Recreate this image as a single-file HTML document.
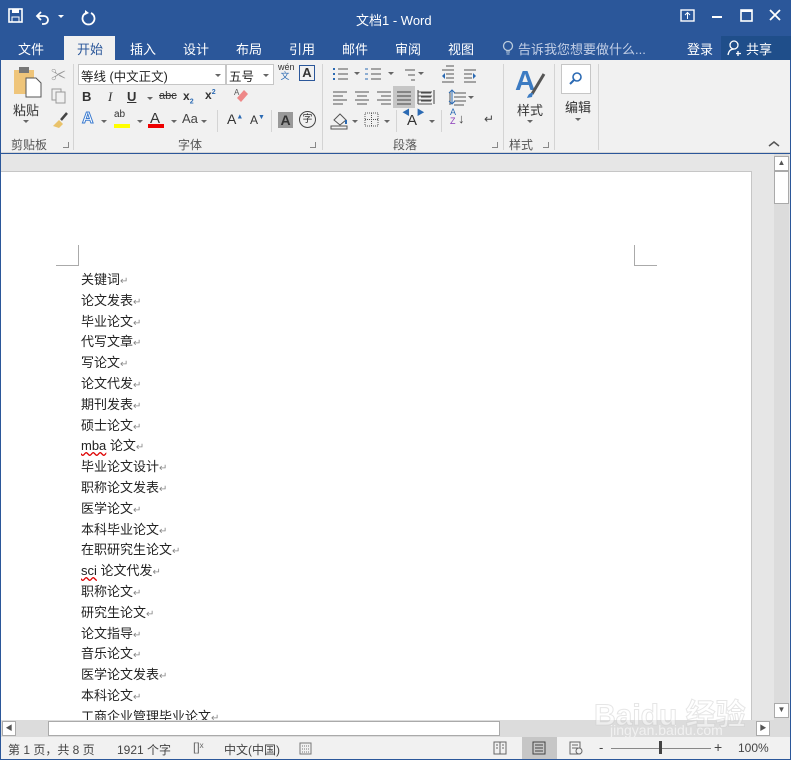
<!DOCTYPE html>
<html><head><meta charset="utf-8"><style>
*{margin:0;padding:0;box-sizing:border-box}
body{width:791px;height:760px;overflow:hidden;font-family:"Liberation Sans","Noto Sans CJK SC",sans-serif;background:#2b579a;position:relative}
.a{position:absolute}
.w{color:#fff}
.t{font-size:13px;color:#fff;top:39px}
.g{color:#444;font-size:12px}
.line{position:absolute;left:81px;font-size:13px;color:#222;white-space:nowrap}
.ret{color:#888;font-size:10px}
.sep{position:absolute;width:1px;background:#d4d4d4}
</style></head><body>
<svg class="a" style="left:8px;top:7px" width="100" height="20">
<rect x="1" y="2" width="13" height="13" fill="none" stroke="#fff" stroke-width="1.6"/><rect x="4" y="2" width="7" height="4" fill="#fff"/><rect x="4" y="10" width="7" height="5" fill="none" stroke="#fff"/>
<path d="M33 5 l-4 4 4 4 M29 9 h7 a4 4 0 0 1 0 8 h-2" fill="none" stroke="#fff" stroke-width="1.8"/>
<path d="M50 8 l3 3 3-3z" fill="#fff"/>
<path d="M83 6 a6 6 0 1 1 -5 0" fill="none" stroke="#fff" stroke-width="1.8"/><path d="M77 3 l4 3-4 2z" fill="#fff"/>
<path d="M104 11 h4 M104 14 l2 2 2-2z" fill="#fff" stroke="#fff"/>
</svg>
<div class="a w" style="left:356px;top:10px;font-size:13px">文档1 - Word</div>
<svg class="a" style="left:680px;top:8px" width="105" height="18">
<rect x="1" y="2" width="13" height="11" fill="none" stroke="#fff" stroke-width="1.4"/><path d="M7.5 11 v-6 M5 7 l2.5-2.5 2.5 2.5" stroke="#fff" fill="none"/>
<rect x="32" y="8" width="10" height="2" fill="#fff"/>
<rect x="61" y="2" width="11" height="11" fill="none" stroke="#fff" stroke-width="1.6"/><rect x="61" y="2" width="11" height="2" fill="#fff"/>
<path d="M90 2 l10 10 M100 2 l-10 10" stroke="#fff" stroke-width="1.8"/>
</svg>
<div class="a t" style="left:18px">文件</div>
<div class="a" style="left:64px;top:36px;width:51px;height:25px;background:#f1f1f1"></div>
<div class="a t" style="left:77px;color:#2b579a">开始</div>
<div class="a t" style="left:130px">插入</div>
<div class="a t" style="left:183px">设计</div>
<div class="a t" style="left:236px">布局</div>
<div class="a t" style="left:289px">引用</div>
<div class="a t" style="left:342px">邮件</div>
<div class="a t" style="left:395px">审阅</div>
<div class="a t" style="left:448px">视图</div>
<svg class="a" style="left:502px;top:40px" width="12" height="16"><circle cx="6" cy="6" r="4.5" fill="none" stroke="#bcd" stroke-width="1.3"/><path d="M4 12 h4 M4.5 14 h3" stroke="#bcd"/></svg>
<div class="a t" style="left:518px;color:#c3cfe6">告诉我您想要做什么...</div>
<div class="a t" style="left:687px">登录</div>
<div class="a" style="left:721px;top:36px;width:70px;height:24px;background:#1f4e8a"></div>
<svg class="a" style="left:727px;top:39px" width="16" height="18"><circle cx="7" cy="6" r="4" fill="none" stroke="#fff" stroke-width="1.3"/><path d="M1 16 q1-6 6-6 M11 12 v5 M9 14.5 h5" fill="none" stroke="#fff" stroke-width="1.3"/></svg>
<div class="a t" style="left:746px">共享</div>
<div class="a" style="left:1px;top:60px;width:789px;height:93px;background:#f1f1f1;border-bottom:1px solid #d5d5d5"></div>
<svg class="a" style="left:12px;top:66px" width="30" height="32"><rect x="2" y="4" width="20" height="24" fill="#efc57a"/><rect x="7" y="1" width="10" height="6" fill="#777"/><path d="M14 12 h10 l5 5 v14 h-15z" fill="#fff" stroke="#555"/></svg>
<div class="a g" style="left:13px;top:100px;font-size:13px;color:#333">粘贴</div>
<div class="a" style="left:23px;top:120px;border:3px solid transparent;border-top-color:#666"></div>
<div class="a" style="left:51px;top:64px;color:#999;font-size:15px">✂</div>
<svg class="a" style="left:51px;top:88px" width="16" height="16"><rect x="1" y="1" width="9" height="11" fill="none" stroke="#999"/><rect x="5" y="4" width="9" height="11" fill="#f1f1f1" stroke="#999"/></svg>
<svg class="a" style="left:51px;top:110px" width="18" height="18"><path d="M2 16 l6-6 4 4-4 4z" fill="#e9c26a"/><path d="M10 10 l6-7" stroke="#444" stroke-width="2.5"/></svg>
<div class="a g" style="left:11px;top:136px;color:#555">剪贴板</div>
<div class="sep" style="left:73px;top:64px;height:86px"></div>
<div class="a" style="left:78px;top:64px;width:148px;height:21px;background:#fff;border:1px solid #c6c6c6;font-size:12.5px;padding:1px 2px;color:#222">等线 (中文正文)</div>
<div class="a" style="left:215px;top:74px;border:3px solid transparent;border-top-color:#666"></div>
<div class="a" style="left:226px;top:64px;width:48px;height:21px;background:#fff;border:1px solid #c6c6c6;font-size:12.5px;padding:1px 2px;color:#222">五号</div>
<div class="a" style="left:263px;top:74px;border:3px solid transparent;border-top-color:#666"></div>
<div class="a" style="left:278px;top:63px;font-size:9px;color:#333;line-height:9px">wén<br><span style="color:#2b6ab3">&nbsp;文</span></div>
<div class="a" style="left:299px;top:65px;width:16px;height:16px;border:1.5px solid #2b579a;font-size:13px;font-weight:bold;text-align:center;line-height:13px;color:#333">A</div>
<div class="a" style="left:82px;top:89px;font-size:13px;color:#333;font-weight:bold">B</div>
<div class="a" style="left:108px;top:89px;font-size:13px;color:#333;font-style:italic;font-family:'Liberation Serif',serif">I</div>
<div class="a" style="left:127px;top:89px;font-size:13px;color:#333;text-decoration:underline;font-weight:bold">U</div>
<div class="a" style="left:147px;top:97px;border:3px solid transparent;border-top-color:#666"></div>
<div class="a" style="left:159px;top:90px;font-size:11px;color:#333;text-decoration:line-through">abc</div>
<div class="a" style="left:183px;top:89px;font-size:12px;color:#333;font-weight:bold">x<sub style="font-size:7px;color:#2b6ab3">2</sub></div>
<div class="a" style="left:205px;top:88px;font-size:12px;color:#333;font-weight:bold">x<sup style="font-size:7px;color:#2b6ab3">2</sup></div>
<svg class="a" style="left:233px;top:86px" width="18" height="18"><path d="M4 12 l7-8 4 4-7 8z" fill="#e88" /><text x="1" y="9" font-size="8" fill="#555">A</text></svg>
<div class="a" style="left:82px;top:110px;font-size:16px;color:#fff;-webkit-text-stroke:1px #3b7bd0;font-weight:bold">A</div>
<div class="a" style="left:101px;top:120px;border:3px solid transparent;border-top-color:#666"></div>
<div class="a" style="left:114px;top:109px;font-size:10px;color:#333">ab</div>
<div class="a" style="left:114px;top:124px;width:16px;height:4px;background:#ffff00"></div>
<div class="a" style="left:137px;top:120px;border:3px solid transparent;border-top-color:#666"></div>
<div class="a" style="left:150px;top:110px;font-size:15px;color:#333">A</div>
<div class="a" style="left:148px;top:124px;width:16px;height:4px;background:#e00"></div>
<div class="a" style="left:171px;top:120px;border:3px solid transparent;border-top-color:#666"></div>
<div class="a" style="left:182px;top:111px;font-size:13px;color:#444">Aa</div>
<div class="a" style="left:201px;top:120px;border:3px solid transparent;border-top-color:#666"></div>
<div class="sep" style="left:217px;top:110px;height:22px"></div>
<div class="a" style="left:227px;top:111px;font-size:14px;color:#333">A<sup style="font-size:7px;color:#2b6ab3">▲</sup></div>
<div class="a" style="left:250px;top:113px;font-size:12px;color:#333">A<sup style="font-size:7px;color:#2b6ab3">▼</sup></div>
<div class="sep" style="left:271px;top:110px;height:22px"></div>
<div class="a" style="left:278px;top:112px;width:15px;height:16px;background:#999;color:#333;font-size:14px;font-weight:bold;text-align:center;line-height:16px">A</div>
<div class="a" style="left:299px;top:111px;width:17px;height:17px;border:1.3px solid #444;border-radius:50%;font-size:10px;text-align:center;line-height:15px;color:#333">字</div>
<div class="a g" style="left:178px;top:136px;color:#555">字体</div>
<div class="sep" style="left:322px;top:64px;height:86px"></div>
<svg class="a" style="left:330px;top:64px" width="160" height="70" stroke="#555" fill="none">
<path d="M8 5h10M8 10h10M8 15h10"/><path d="M3 5h2M3 10h2M3 15h2" stroke="#2b6ab3" stroke-width="2"/>
<path d="M41 5h10M41 10h10M41 15h10"/><path d="M35 5h3M35 10h3M35 15h3" stroke="#2b6ab3"/>
<path d="M75 6h10M78 11h7M81 16h4"/>
<path d="M112 6h12M116 10h8M116 14h8M112 18h12M116 2h8"/><path d="M112 12l3-3v6z" fill="#2b6ab3" stroke="none"/>
<path d="M134 6h12M134 10h8M134 14h8M134 18h12"/><path d="M146 12l-3-3v6z" fill="#2b6ab3" stroke="none"/>
<path d="M3 28h14M3 32h10M3 36h14M3 40h10"/>
<path d="M25 28h14M27 32h10M25 36h14M27 40h10"/>
<path d="M47 28h14M51 32h10M47 36h14M51 40h10"/>
<path d="M88 28h14M88 32h14M88 36h14M88 40h14"/>
<path d="M120 28v13M124 29h10M124 33h10M124 37h10M124 41h10"/>
</svg>
<div class="a" style="left:354px;top:72px;border:3px solid transparent;border-top-color:#666"></div>
<div class="a" style="left:388px;top:72px;border:3px solid transparent;border-top-color:#666"></div>
<div class="a" style="left:418px;top:72px;border:3px solid transparent;border-top-color:#666"></div>
<div class="a" style="left:393px;top:86px;width:22px;height:22px;background:#c6c6c6"></div>
<svg class="a" style="left:395px;top:88px" width="18" height="18" stroke="#444"><path d="M2 4h14M2 8h14M2 12h14M2 16h14"/></svg>
<svg class="a" style="left:416px;top:88px" width="20" height="18" stroke="#444" fill="none"><path d="M2 2v14M18 2v14M5 5h10M5 9h10M5 13h10"/></svg>
<svg class="a" style="left:448px;top:88px" width="20" height="18" stroke="#555" fill="none"><path d="M4 2v14M1 5l3-3 3 3M1 13l3 3 3-3" stroke="#2b6ab3"/><path d="M10 5h8M10 9h8M10 13h8"/></svg>
<div class="a" style="left:468px;top:96px;border:3px solid transparent;border-top-color:#666"></div>
<svg class="a" style="left:330px;top:110px" width="20" height="20"><path d="M4 10l6-6 6 6-6 5z" fill="none" stroke="#555"/><path d="M16 10v4" stroke="#2b6ab3" stroke-width="2"/><rect x="1" y="16" width="16" height="3" fill="none" stroke="#555"/></svg>
<div class="a" style="left:352px;top:120px;border:3px solid transparent;border-top-color:#666"></div>
<svg class="a" style="left:364px;top:112px" width="16" height="16" stroke="#555" stroke-dasharray="1 1" fill="none"><rect x="1" y="1" width="13" height="13"/><path d="M1 7.5h13M7.5 1v13"/></svg>
<div class="a" style="left:384px;top:120px;border:3px solid transparent;border-top-color:#666"></div>
<div class="sep" style="left:396px;top:110px;height:22px"></div>
<div class="a" style="left:407px;top:112px;font-size:15px;color:#333">A</div>
<div class="a" style="left:402px;top:107px;font-size:8px;color:#2b6ab3">◀&nbsp;&nbsp;&nbsp;▶</div>
<div class="a" style="left:429px;top:120px;border:3px solid transparent;border-top-color:#666"></div>
<div class="sep" style="left:441px;top:110px;height:22px"></div>
<div class="a" style="left:450px;top:108px;font-size:9px;line-height:9px;color:#2b6ab3">A<br><span style="color:#8a3ab9">Z</span></div>
<div class="a" style="left:458px;top:111px;font-size:13px;color:#444">↓</div>
<div class="a" style="left:484px;top:112px;font-size:12px;color:#444">↵</div>
<div class="a g" style="left:393px;top:136px;color:#555">段落</div>
<div class="a" style="left:310px;top:142px;width:6px;height:6px;border-right:1px solid #888;border-bottom:1px solid #888"></div>
<div class="a" style="left:63px;top:142px;width:6px;height:6px;border-right:1px solid #888;border-bottom:1px solid #888"></div>
<div class="a" style="left:492px;top:142px;width:6px;height:6px;border-right:1px solid #888;border-bottom:1px solid #888"></div>
<div class="a" style="left:543px;top:142px;width:6px;height:6px;border-right:1px solid #888;border-bottom:1px solid #888"></div>
<div class="sep" style="left:503px;top:64px;height:86px"></div>
<svg class="a" style="left:514px;top:64px" width="34" height="36"><text x="1" y="26" font-size="28" font-family="Liberation Sans" fill="#3c7bc2" font-weight="bold">A</text><path d="M18 30 l12-20" stroke="#555" stroke-width="3"/><path d="M13 34 q2-6 6-5 l-1 4z" fill="#3c7bc2"/></svg>
<div class="a" style="left:517px;top:100px;font-size:13px;color:#333">样式</div>
<div class="a" style="left:527px;top:120px;border:3px solid transparent;border-top-color:#666"></div>
<div class="a g" style="left:509px;top:136px;color:#555">样式</div>
<div class="sep" style="left:554px;top:64px;height:86px"></div>
<div class="a" style="left:561px;top:64px;width:30px;height:30px;border:1px solid #c6c6c6;background:#fff"></div>
<svg class="a" style="left:568px;top:71px" width="16" height="16"><circle cx="9" cy="6" r="4" fill="none" stroke="#2b6ab3" stroke-width="1.6"/><path d="M6 9l-4 4" stroke="#2b6ab3" stroke-width="2"/></svg>
<div class="a" style="left:565px;top:97px;font-size:13px;color:#333">编辑</div>
<div class="a" style="left:575px;top:118px;border:3px solid transparent;border-top-color:#666"></div>
<div class="sep" style="left:598px;top:64px;height:86px"></div>
<svg class="a" style="left:768px;top:140px" width="12" height="8"><path d="M1 6l5-4 5 4" stroke="#555" stroke-width="1.5" fill="none"/></svg>
<div class="a" style="left:1px;top:154px;width:789px;height:566px;background:#e6e6e6"></div>
<div class="a" style="left:1px;top:171px;width:751px;height:549px;background:#fff;border-right:1px solid #c6c6c6;border-top:1px solid #c6c6c6"></div>
<div class="a" style="left:56px;top:245px;width:23px;height:21px;border-right:1px solid #aaa;border-bottom:1px solid #aaa"></div>
<div class="a" style="left:634px;top:245px;width:23px;height:21px;border-left:1px solid #aaa;border-bottom:1px solid #aaa"></div>
<div class="line" style="top:269px">关键词<span class="ret">↵</span></div>
<div class="line" style="top:290px">论文发表<span class="ret">↵</span></div>
<div class="line" style="top:311px">毕业论文<span class="ret">↵</span></div>
<div class="line" style="top:331px">代写文章<span class="ret">↵</span></div>
<div class="line" style="top:352px">写论文<span class="ret">↵</span></div>
<div class="line" style="top:373px">论文代发<span class="ret">↵</span></div>
<div class="line" style="top:394px">期刊发表<span class="ret">↵</span></div>
<div class="line" style="top:415px">硕士论文<span class="ret">↵</span></div>
<div class="line" style="top:435px"><span style="text-decoration:underline wavy #d00">mba</span> 论文<span class="ret">↵</span></div>
<div class="line" style="top:456px">毕业论文设计<span class="ret">↵</span></div>
<div class="line" style="top:477px">职称论文发表<span class="ret">↵</span></div>
<div class="line" style="top:498px">医学论文<span class="ret">↵</span></div>
<div class="line" style="top:519px">本科毕业论文<span class="ret">↵</span></div>
<div class="line" style="top:539px">在职研究生论文<span class="ret">↵</span></div>
<div class="line" style="top:560px"><span style="text-decoration:underline wavy #d00">sci</span> 论文代发<span class="ret">↵</span></div>
<div class="line" style="top:581px">职称论文<span class="ret">↵</span></div>
<div class="line" style="top:602px">研究生论文<span class="ret">↵</span></div>
<div class="line" style="top:623px">论文指导<span class="ret">↵</span></div>
<div class="line" style="top:643px">音乐论文<span class="ret">↵</span></div>
<div class="line" style="top:664px">医学论文发表<span class="ret">↵</span></div>
<div class="line" style="top:685px">本科论文<span class="ret">↵</span></div>
<div class="line" style="top:706px;height:14px;overflow:hidden">工商企业管理毕业论文<span class="ret">↵</span></div>
<div class="a" style="left:774px;top:154px;width:15px;height:566px;background:#dcdcdc"></div>
<div class="a" style="left:774px;top:156px;width:15px;height:15px;background:#fff;border:1px solid #aaa;font-size:8px;color:#555;text-align:center;line-height:12px">▲</div>
<div class="a" style="left:774px;top:171px;width:15px;height:33px;background:#fff;border:1px solid #aaa"></div>
<div class="a" style="left:774px;top:703px;width:15px;height:15px;background:#fff;border:1px solid #aaa;font-size:8px;color:#555;text-align:center;line-height:12px">▼</div>
<div class="a" style="left:1px;top:720px;width:789px;height:17px;background:#dcdcdc"></div>
<div class="a" style="left:2px;top:721px;width:14px;height:15px;background:#fff;border:1px solid #aaa;font-size:7px;color:#555;text-align:center;line-height:13px">◀</div>
<div class="a" style="left:48px;top:721px;width:452px;height:15px;background:#fff;border:1px solid #aaa"></div>
<div class="a" style="left:756px;top:721px;width:14px;height:15px;background:#fff;border:1px solid #aaa;font-size:7px;color:#555;text-align:center;line-height:13px">▶</div>
<div class="a" style="left:594px;top:690px;font-size:30px;color:rgba(255,255,255,.5);-webkit-text-stroke:1px rgba(200,200,200,.45);font-weight:bold">Baidu 经验</div>
<div class="a" style="left:610px;top:722px;font-size:14px;color:rgba(255,255,255,.6)">jingyan.baidu.com</div>
<div class="a" style="left:1px;top:737px;width:789px;height:22px;background:#f1f1f1"></div>
<div class="a" style="left:8px;top:741px;font-size:12px;color:#444">第 1 页，共 8 页</div>
<div class="a" style="left:117px;top:741px;font-size:12px;color:#444">1921 个字</div>
<div class="a" style="left:193px;top:740px;font-size:12px;color:#666">[]ˣ</div>
<div class="a" style="left:224px;top:741px;font-size:12px;color:#444">中文(中国)</div>
<svg class="a" style="left:299px;top:741px" width="14" height="14"><rect x="1" y="2" width="11" height="11" fill="none" stroke="#777"/><path d="M3 5h7M3 8h7M3 11h7" stroke="#777" stroke-dasharray="1 1"/></svg>
<svg class="a" style="left:493px;top:741px" width="14" height="14" stroke="#666" fill="none"><rect x="1" y="1" width="12" height="12"/><path d="M7 1v12M3 4h2M3 7h2M9 4h2M9 7h2"/></svg>
<div class="a" style="left:522px;top:737px;width:35px;height:22px;background:#c6c6c6"></div>
<svg class="a" style="left:532px;top:741px" width="14" height="14" stroke="#444" fill="none"><rect x="1" y="1" width="12" height="12"/><path d="M3 4h8M3 7h8M3 10h8"/></svg>
<svg class="a" style="left:569px;top:741px" width="14" height="14" stroke="#666" fill="none"><rect x="1" y="1" width="10" height="12"/><path d="M3 4h6M3 7h6"/><circle cx="10" cy="10" r="3" fill="#f1f1f1"/></svg>
<div class="a" style="left:599px;top:740px;font-size:13px;color:#444">-</div>
<div class="a" style="left:611px;top:748px;width:100px;height:1px;background:#888"></div>
<div class="a" style="left:659px;top:741px;width:3px;height:13px;background:#444"></div>
<div class="a" style="left:714px;top:739px;font-size:14px;color:#444">+</div>
<div class="a" style="left:738px;top:741px;font-size:12px;color:#444">100%</div>
</body></html>
